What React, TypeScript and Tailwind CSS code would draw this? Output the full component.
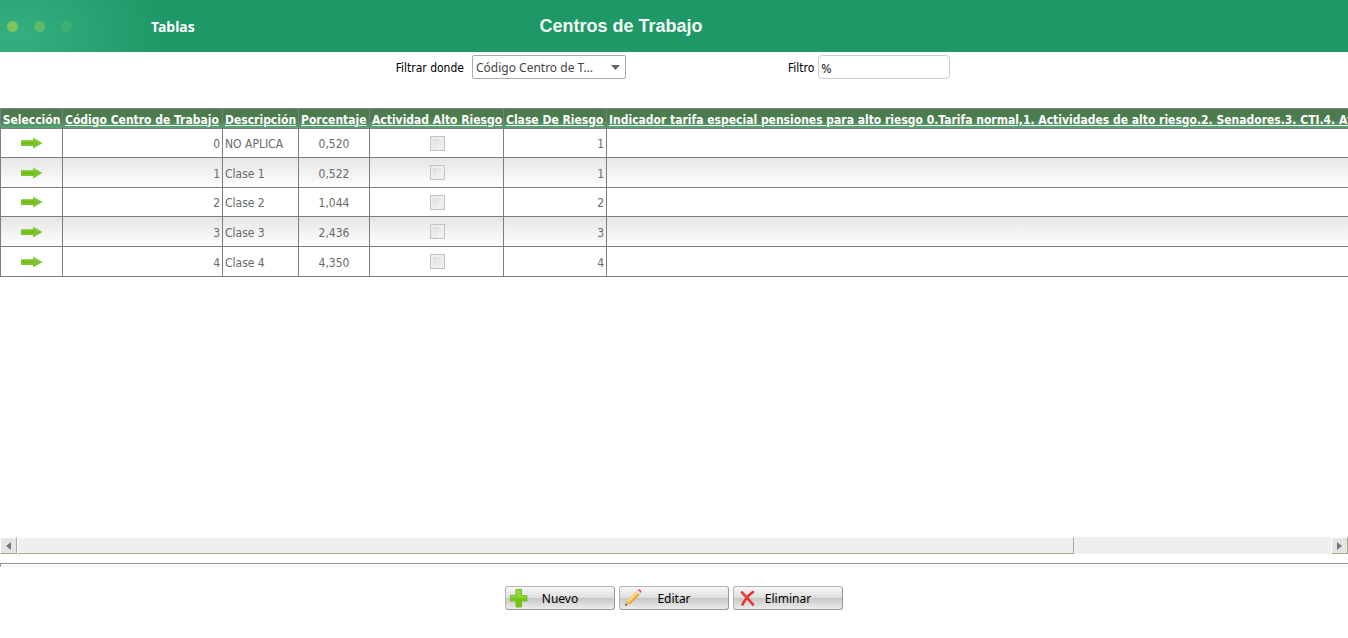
type CentroT = {
  codigo: number;
  descripcion: string;
  porcentaje: string;
  clase: number;
};

const centros: CentroT[] = [
  { codigo: 0, descripcion: "NO APLICA", porcentaje: "0,520", clase: 1 },
  { codigo: 1, descripcion: "Clase 1", porcentaje: "0,522", clase: 1 },
  { codigo: 2, descripcion: "Clase 2", porcentaje: "1,044", clase: 2 },
  { codigo: 3, descripcion: "Clase 3", porcentaje: "2,436", clase: 3 },
  { codigo: 4, descripcion: "Clase 4", porcentaje: "4,350", clase: 4 },
];

const columns = [
  "Código Centro de Trabajo",
  "Descripción",
  "Porcentaje",
  "Actividad Alto Riesgo",
  "Clase De Riesgo",
  "Indicador tarifa especial pensiones para alto riesgo 0.Tarifa normal,1. Actividades de alto riesgo.2. Senadores.3. CTI.4. Aviadores",
];

export default function App() {
  return (
    <div className="flex min-h-screen flex-col bg-white font-['Tahoma','DejaVu_Sans_Condensed','Noto_Sans',sans-serif] text-[12px] text-black">
      <Header />
      <FilterBar />
      <main className="flex min-w-0 flex-1 flex-col">
        <div className="flex-1 overflow-hidden">
          <CentrosTable />
        </div>
        <ScrollTrack />
      </main>
      <hr className="mt-[9px] h-[4px] border-t border-b border-l border-t-[#999] border-b-[#eee] border-l-[#999]" />
      <Actions />
    </div>
  );
}

function Header() {
  return (
    <header className="grid h-[52px] grid-cols-[1fr_auto_1fr] items-center bg-[#1e9867] bg-[radial-gradient(ellipse_150px_100px_at_15px_34px,#34b081,#1e9867)]">
      <div className="flex items-center">
        <div className="flex w-[151px] gap-4 pl-[7px]" aria-hidden>
          <span className="size-[11px] rounded-full bg-[#7fc45d]" />
          <span className="size-[11px] rounded-full bg-[#5cbb69]" />
          <span className="size-[11px] rounded-full bg-[#3fae75]" />
        </div>
        <span className="font-['Noto_Sans',sans-serif] text-[14px] font-bold text-white">Tablas</span>
      </div>
      <h1 className="mr-[106px] font-['Liberation_Sans',Arial,sans-serif] text-[18px] font-bold text-[#f4fbf5]">
        Centros de Trabajo
      </h1>
      <span />
    </header>
  );
}

function FilterBar() {
  return (
    <form className="flex h-[56px] items-start justify-center pt-[3px] pr-[2px]">
      <label htmlFor="campo" className="mr-2 leading-[26px]">
        Filtrar donde
      </label>
      <div className="relative">
        <select
          id="campo"
          className="h-[24px] w-[154px] appearance-none truncate rounded-[2px] border border-[#aaa] bg-white pt-[1px] pr-[28px] pl-[3px] font-['Noto_Sans',sans-serif] text-[12px] text-[#444]"
        >
          <option>Código Centro de Trabajo</option>
          <option>Descripción</option>
        </select>
        <svg className="pointer-events-none absolute top-[10px] right-[6px] h-[5px] w-[9px] fill-[#666]" viewBox="0 0 9 5">
          <path d="M0 0h9L4.500 5z" />
        </svg>
      </div>
      <label htmlFor="filtro" className="mr-1 ml-[162px] leading-[26px]">
        Filtro
      </label>
      <input
        id="filtro"
        type="text"
        defaultValue="%"
        className="h-[24px] w-[132px] rounded-[4px] border border-[#ccc] bg-white px-[2px] pt-[3px]"
      />
    </form>
  );
}

function CentrosTable() {
  return (
    <table className="w-[1677px] table-fixed border-collapse text-[12px] text-[#696969]">
      <colgroup>
        <col className="w-[62px]" />
        <col className="w-[160px]" />
        <col className="w-[76px]" />
        <col className="w-[71px]" />
        <col className="w-[134px]" />
        <col className="w-[103px]" />
        <col />
      </colgroup>
      <thead>
        <tr className="h-[20px] bg-linear-to-b from-[#4c7b4d] from-50% to-[#57ab79] text-[12px] leading-[16px] whitespace-nowrap text-white">
          <th className="border border-[#7d7d7d] px-px pt-[2px] pb-0">Selección</th>
          {columns.map((name) => (
            <th key={name} className="border border-[#7d7d7d] px-[2px] pt-[2px] pb-0 text-left">
              <a href="#" className="underline">
                {name}
              </a>
            </th>
          ))}
        </tr>
      </thead>
      <tbody>
        {centros.map((row) => (
          <tr key={row.codigo} className="h-[29px] even:h-[30px] even:bg-linear-to-b even:from-[#e6e6e6] even:to-white last:h-[30px]">
            <Cell className="text-center">
              <button type="button" aria-label={`Seleccionar ${row.descripcion}`} className="block w-full">
                <ArrowIcon />
              </button>
            </Cell>
            <Cell className="pt-[2px] text-right">{row.codigo}</Cell>
            <Cell className="pt-[2px]">{row.descripcion}</Cell>
            <Cell className="pt-[2px] text-center">{row.porcentaje}</Cell>
            <Cell className="pl-1 text-center">
              <input
                type="checkbox"
                disabled
                aria-label={`Actividad alto riesgo ${row.descripcion}`}
                className="mx-auto block size-[15px] appearance-none border border-[#c3c3c3] bg-linear-to-br from-[#d8d8d8] to-[#fafafa] shadow-[inset_0_0_0_2px_#eeeeee]"
              />
            </Cell>
            <Cell className="pt-[2px] text-right">{row.clase}</Cell>
            <Cell />
          </tr>
        ))}
      </tbody>
    </table>
  );
}

function Cell({ className = "", children }: { className?: string; children?: React.ReactNode }) {
  return <td className={`border border-[#7d7d7d] px-[2px] leading-[16px] ${className}`}>{children}</td>;
}

function ScrollTrack() {
  return (
    <div className="flex h-[17px] bg-[#efefef]">
      <button
        type="button"
        aria-label="Desplazar a la izquierda"
        className="flex w-[17px] items-center justify-center border-t border-r border-b border-l border-[#a3ae90] border-t-white border-l-white bg-[#e4e4e4]"
      >
        <svg className="h-[8px] w-[5px] fill-[#777]" viewBox="0 0 5 8">
          <path d="M5 0v8L0 4z" />
        </svg>
      </button>
      <div className="flex flex-1 border-l border-white">
        <div className="w-[80.400%] border-t border-r border-b border-[#a3ae90] border-t-white" />
      </div>
      <button
        type="button"
        aria-label="Desplazar a la derecha"
        className="flex w-[17px] items-center justify-center border-t border-r border-b border-l border-[#a3ae90] border-t-white border-l-white bg-[#e4e4e4]"
      >
        <svg className="h-[8px] w-[5px] fill-[#777]" viewBox="0 0 5 8">
          <path d="M0 0v8l5-4z" />
        </svg>
      </button>
    </div>
  );
}

function Actions() {
  return (
    <footer className="flex h-[71px] items-start justify-center gap-1 pt-[19px]">
      <ActionButton label="Nuevo" icon={<PlusIcon />} />
      <ActionButton label="Editar" icon={<PencilIcon />} />
      <ActionButton label="Eliminar" icon={<CrossIcon />} />
    </footer>
  );
}

function ActionButton({ label, icon }: { label: string; icon: React.ReactNode }) {
  return (
    <button
      type="button"
      className="flex h-[24px] w-[110px] items-center rounded-[3px] border border-[#b5b5b5] border-r-[#999] border-b-[#999] bg-[linear-gradient(#f7f7f7,#dedede_50%,#c6c6c6_50%,#ececec)] pl-[3px] font-['Noto_Sans',sans-serif] text-[12px]"
    >
      {icon}
      <span className="flex-1 pt-[2px] pr-[23px] text-center">{label}</span>
    </button>
  );
}

function ArrowIcon() {
  return (
    <svg className="mx-auto h-[12px] w-[22px]" viewBox="0 0 22 12">
      <path d="M0 3h12V.5L21.500 6 12 11.500V9H0z" fill="#7cc42f" />
      <path d="M0 3h12v1H0zM12 .5L21.500 6H20L12 2z" fill="#9bd163" />
      <path d="M1 5h12v2H1z" fill="#6fc010" />
    </svg>
  );
}

function PlusIcon() {
  return (
    <svg className="size-[20px]" viewBox="0 0 20 20">
      <path
        d="M7 1.500h5.500v6H18v5.500h-5.500v6H7V13H1.500V7.500H7z"
        fill="#74c80e"
        stroke="#74bd2a"
        strokeWidth="1"
        strokeLinejoin="round"
      />
      <path d="M7.500 2h4.500v6h5.500v1.500H2V8h5.500z" fill="#93d83c" />
    </svg>
  );
}

function PencilIcon() {
  return (
    <svg className="size-[20px]" viewBox="0 0 20 20">
      <path d="M2 18l1.500-5L14 2.500 17.500 6 7 16z" fill="#f7bd4c" />
      <path d="M4.500 12.800L14.500 2.800l1.200 1.200L5.500 14z" fill="#ffdd8b" />
      <path d="M6 15.500L16.500 5l1 1L7 16z" fill="#e5a040" />
      <path d="M2 18l1.500-5 3.500 3z" fill="#d9b995" />
      <path d="M2 18l.7-2.400 1.600 1.500z" fill="#5b4b40" />
      <path d="M13 3.500l1.500-1.500 3.500 3.500-1.500 1.500z" fill="#ddd" />
      <path d="M15 1.800c1.500-1.300 4 .8 3 3.200z" fill="#d4332f" />
    </svg>
  );
}

function CrossIcon() {
  return (
    <svg className="size-[20px]" viewBox="0 0 20 20" fill="none" strokeLinecap="round">
      <path d="M5 4.500c3 3 6.500 7 11 12M16 4c-4.500 3-8 7.500-10.500 12.500" stroke="#e5302f" strokeWidth="2.600" />
      <path d="M5.500 5l4 4.500" stroke="#f06a60" strokeWidth="1" />
    </svg>
  );
}
